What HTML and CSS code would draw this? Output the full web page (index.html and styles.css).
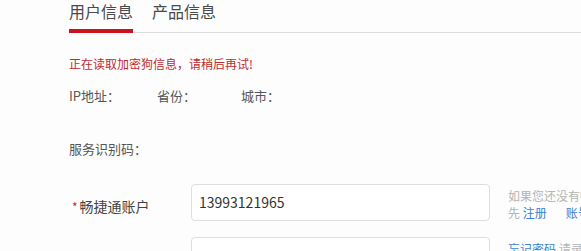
FILE: index.html
```html
<!DOCTYPE html>
<html lang="zh-CN">
<head>
<meta charset="utf-8">
<link rel="stylesheet" href="styles.css">
</head>
<body>
<div class="page">
  <div class="tabs">
    <div class="tab active">用户信息</div>
    <div class="tab">产品信息</div>
  </div>
  <div class="msg">正在读取加密狗信息，请稍后再试!</div>
  <div class="info">
    <span class="ip">IP地址：</span>
    <span class="prov">省份：</span>
    <span class="city">城市：</span>
  </div>
  <div class="code">服务识别码：</div>
  <div class="form-row">
    <div class="label"><span class="star">*</span>畅捷通账户</div>
    <div class="input">13993121965</div>
    <div class="help">
      <div>如果您还没有畅捷通账户，请</div>
      <div>先 <a class="link">注册</a><a class="link gap">账号</a></div>
    </div>
  </div>
  <div class="form-row row2">
    <div class="label"></div>
    <div class="input"></div>
    <div class="help">
      <div><a class="link ul">忘记密码</a> 请录入</div>
    </div>
  </div>
</div>
</body>
</html>
```
FILE: styles.css
```css
html, body {
  margin: 0;
  padding: 0;
  background: #fdfdfd;
}
body {
  font-family: "Noto Sans CJK SC", "Noto Sans", sans-serif;
  color: #555;
  overflow: hidden;
  height: 251px;
}
.page {
  padding-left: 69px;
  overflow: hidden;
  height: 251px;
}
.tabs {
  display: flex;
  gap: 19px;
  border-bottom: 1px solid #dcdcdc;
  height: 32px;
}
.tab {
  font-size: 16px;
  line-height: 22px;
  height: 29px;
  color: #4a4a4a;
  width: 64px;
  white-space: nowrap;
}
.tab.active {
  border-bottom: 4px solid #c8141c;
}
.msg {
  margin-top: 22px;
  font-size: 12px;
  line-height: 18px;
  color: #be2a30;
}
.info {
  margin-top: 13px;
  display: flex;
  font-size: 13px;
  line-height: 20px;
  color: #555;
}
.ip { width: 88px; }
.prov { width: 84px; }
.code {
  margin-top: 33px;
  font-size: 13px;
  line-height: 20px;
  color: #555;
}
.form-row {
  margin-top: 25px;
  display: flex;
  align-items: flex-start;
}
.row2 {
  margin-top: 16px;
}
.label {
  flex: none;
  width: 122px;
  font-size: 14px;
  line-height: 20px;
  padding-top: 12px;
  color: #444;
  padding-left: 3px;
  box-sizing: border-box;
}
.star {
  color: #c22a2e;
  font-size: 12px;
  margin-right: 2px;
}
.input {
  flex: none;
  width: 299px;
  height: 37px;
  box-sizing: border-box;
  border: 1px solid #dedede;
  border-radius: 4px;
  background: #fff;
  font-size: 14px;
  line-height: 35px;
  padding-left: 7px;
  color: #333;
}
.help {
  flex: none;
  margin-left: 18px;
  font-size: 12px;
  line-height: 17px;
  padding-top: 3px;
  color: #b4b4b4;
  white-space: nowrap;
}
.link {
  color: #3a7fd0;
}
.link.gap {
  margin-left: 19px;
}
.link.ul {
  text-decoration: underline;
}
```
